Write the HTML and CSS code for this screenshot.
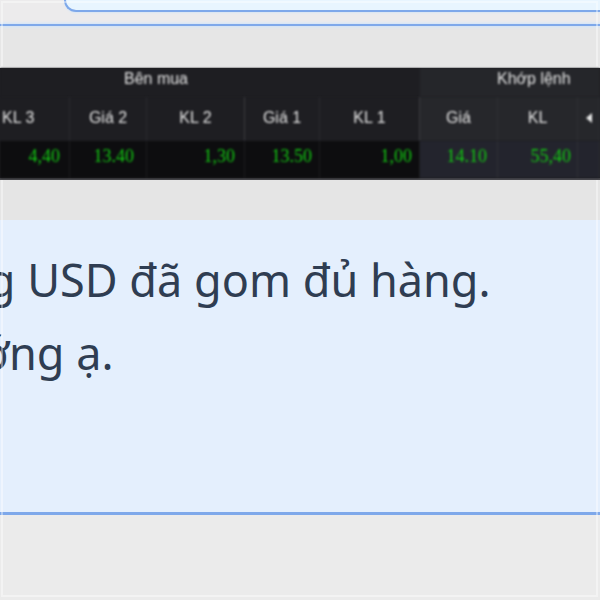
FILE: index.html
```html
<!DOCTYPE html>
<html lang="vi">
<head>
    <meta charset="UTF-8">
    <meta name="viewport" content="width=device-width, initial-scale=1.0">
    <title>Bảng giá</title>
    <link rel="stylesheet" href="styles.css">
</head>
<body>

<div class="page">
    <!-- Previous message bubble -->
    <div class="top-area">
        <div class="bubble-top"></div>
        <div class="rule"></div>
    </div>

    <!-- Price board -->
    <div class="board-area">
        <div class="board">
            <div class="group-row">
                <div class="group group-buy">Bên mua</div>
                <div class="group group-match">Khớp lệnh</div>
            </div>
            <div class="cells head-row">
                <div class="cell c1">KL 3</div>
                <div class="cell c2">Giá 2</div>
                <div class="cell c3">KL 2</div>
                <div class="cell c4">Giá 1</div>
                <div class="cell c5">KL 1</div>
                <div class="cell c6 match">Giá</div>
                <div class="cell c7 match">KL</div>
                <div class="cell c8 match"><span class="arrow"></span></div>
            </div>
            <div class="cells data-row">
                <div class="cell c1">4,40</div>
                <div class="cell c2">13.40</div>
                <div class="cell c3">1,30</div>
                <div class="cell c4">13.50</div>
                <div class="cell c5">1,00</div>
                <div class="cell c6 match">14.10</div>
                <div class="cell c7 match">55,40</div>
                <div class="cell c8 match"></div>
            </div>
        </div>
    </div>

    <!-- Message -->
    <div class="message">
        <p class="line-one">ng USD đã gom đủ hàng.</p>
        <p class="line-two">ướng ạ.</p>
    </div>

    <div class="bottom-area"></div>
</div>

</body>
</html>
```

FILE: styles.css
```css
* {
    box-sizing: border-box;
}
html, body {
    margin: 0;
    height: 100%;
    overflow: hidden;
}
body {
    font-family: 'Liberation Sans', sans-serif;
    background-color: #e8e8e8;
}
body::after {
    content: "";
    position: absolute;
    top: 1px;
    left: 1px;
    right: 2px;
    bottom: 3px;
    border: 2px solid rgba(255, 255, 255, 0.4);
    pointer-events: none;
}
.page {
    width: 600px;
    height: 600px;
    display: flex;
    flex-direction: column;
    overflow: hidden;
}

/* top */
.top-area {
    height: 68px;
    background: linear-gradient(#ecebec 25px, #e6e6e6 25px);
    border-bottom: 2px solid #f4f4f4;
}
.bubble-top {
    height: 12px;
    margin-left: 64px;
    background-color: #e8f5ff;
    border: 2px solid #7ea8ea;
    border-top: none;
    border-right: none;
    border-bottom-left-radius: 14px;
    box-shadow: 0 1px 2px #d8e6f5;
}
.rule {
    height: 2px;
    margin-top: 12px;
    background-color: #7ea8ea;
    box-shadow: 0 0 3px 1px #cfe4fb;
}

/* board */
.board-area {
    background-color: #e5e5e5;
    padding-bottom: 40px;
}
.board {
    position: relative;
    z-index: 1;
    height: 112px;
    background-color: #1e1e22;
    border-bottom: 2px solid #4a4a4e;
    color: #e4e4e4;
    font-size: 16px;
    display: flex;
    flex-direction: column;
}
.board > * {
    filter: blur(0.9px);
}
.group-row {
    height: 29px;
    display: flex;
    background: linear-gradient(90deg, #1e1e22 420px, #25262a 420px);
}
.group {
    line-height: 22px;
}
.group-buy {
    width: 312px;
    text-align: center;
}
.group-match {
    flex: 1;
    padding-left: 185px;
}
.cells {
    display: grid;
    grid-template-columns: 70px 77px 98px 75px 100px 78px 80px 22px;
}
.head-row {
    height: 44px;
}
.head-row .cell {
    display: flex;
    align-items: center;
    justify-content: center;
    padding-bottom: 3px;
    border-right: 1px solid #2b2b30;
}
.head-row .c1 {
    justify-content: flex-start;
    padding-left: 2px;
}
.head-row .c3, .head-row .c5 {
    border-right-color: #3c3c40;
}
.data-row {
    flex: 1;
    background-color: #0d0d0f;
    color: #12c812;
    font-family: 'Liberation Serif', serif;
    font-size: 18px;
}
.data-row .cell {
    display: flex;
    align-items: center;
    justify-content: flex-end;
    padding: 0 9px 6px 0;
    border-right: 1px solid #1c1c1f;
}
.data-row .c2 {
    padding-right: 12px;
}
.data-row .c4, .data-row .c5 {
    padding-right: 7px;
}
.data-row .c6 {
    padding-right: 10px;
}
.data-row .c7 {
    padding-right: 6px;
}
.cell.match {
    background-color: #26272b;
    border-right-color: #2f3035;
}
.data-row .cell.match {
    background-color: #23242d;
}
.arrow {
    width: 0;
    height: 0;
    border-top: 5px solid transparent;
    border-bottom: 5px solid transparent;
    border-right: 6px solid #e8e8e8;
}

/* message */
.message {
    height: 295px;
    flex: none;
    padding-top: 23px;
    background-color: #e4effd;
    border-bottom: 3px solid #7ea8ea;
    box-shadow: 0 1px 1px #8d9db3;
    color: #2f3d52;
    font-family: 'Noto Sans', sans-serif;
    font-size: 45px;
    line-height: 73px;
    white-space: nowrap;
}
.message p {
    margin: 0;
}
.message .line-one {
    margin-left: -40px;
}
.message .line-two {
    margin-left: -49px;
}
.bottom-area {
    flex: 1;
    background-color: #ebebeb;
}
```
